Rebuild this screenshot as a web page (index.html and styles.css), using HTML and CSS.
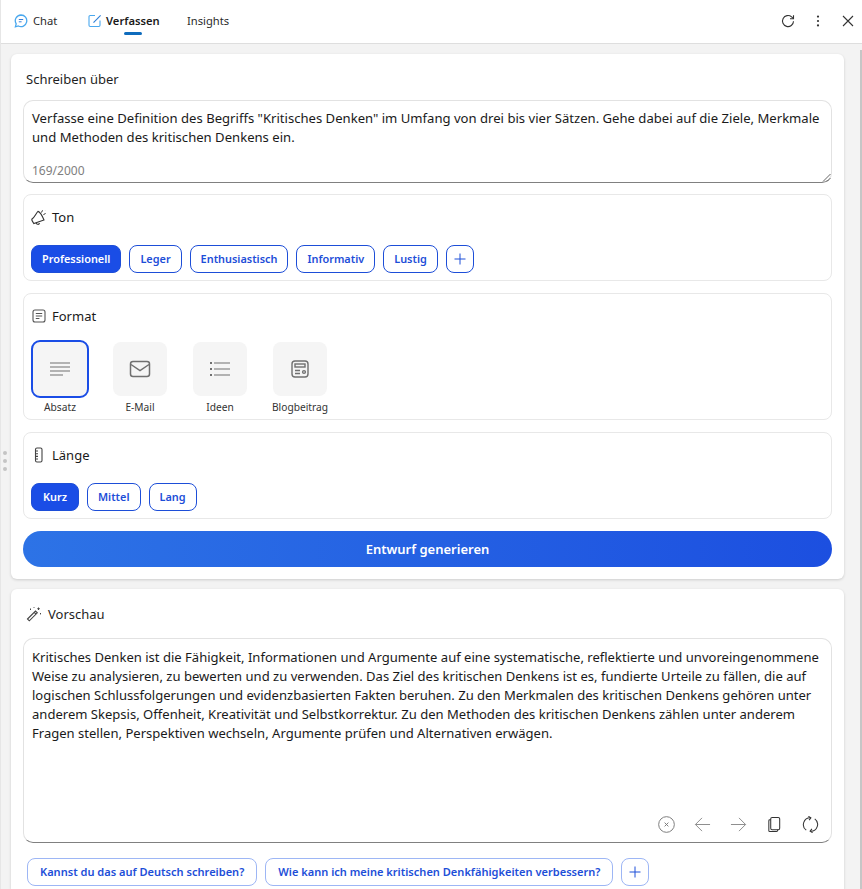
FILE: index.html
```html
<!DOCTYPE html>
<html lang="de">
<head>
<meta charset="utf-8">
<title>Verfassen</title>
<link rel="stylesheet" href="styles.css">
</head>
<body>
<div class="app">
  <header class="topbar">
    <nav class="tabs">
      <a class="tab tab-chat">
        <svg class="tab-icon" viewBox="0 0 14 14" fill="none" stroke="#4aa8ee" stroke-width="1.300"><path d="M7 1a5.800 5.800 0 1 1-2.600 11L1.400 12.900l.8-3A5.800 5.800 0 0 1 7 1z"/><path d="M4.800 5.500h4.400M4.800 7.800h2.800" stroke="#3a7fd8" stroke-width="1"/></svg>
        <span>Chat</span>
      </a>
      <a class="tab tab-compose active">
        <svg class="tab-icon" viewBox="0 0 14 14" fill="none" stroke="#4aa8ee" stroke-width="1.100"><path d="M7 1.500H2.200a1.200 1.200 0 0 0-1.200 1.200v8.600a1.200 1.200 0 0 0 1.200 1.200h8.600a1.200 1.200 0 0 0 1.200-1.200V6.500"/><path d="M5.500 8.600 12.600 1.400" stroke="#2f7fd8"/></svg>
        <span>Verfassen</span>
      </a>
      <a class="tab tab-insights"><span>Insights</span></a>
    </nav>
    <div class="win-actions">
      <svg class="win-icon" viewBox="0 0 14 14" fill="none" stroke="#333" stroke-width="1.100"><path d="M12.500 7.200A5.500 5.500 0 1 1 10.600 2.900L12.500 4.600"/><path d="M12.500 1.200v3.500H9"/></svg>
      <svg class="win-icon" viewBox="0 0 14 14" fill="#333"><circle cx="7" cy="2.600" r="1.100"/><circle cx="7" cy="7" r="1.100"/><circle cx="7" cy="11.400" r="1.100"/></svg>
      <svg class="win-icon" viewBox="0 0 14 14" fill="none" stroke="#333" stroke-width="1.100"><path d="M2 2l10 10M12 2 2 12"/></svg>
    </div>
  </header>

  <main class="content">
    <span class="grip"><i></i><i></i><i></i></span>
    <span class="scroll-edge"></span>

    <section class="card compose-card">
      <h2 class="card-title">Schreiben über</h2>
      <div class="textbox">
        <p>Verfasse eine Definition des Begriffs "Kritisches Denken" im Umfang von drei bis vier Sätzen. Gehe dabei auf die Ziele, Merkmale und Methoden des kritischen Denkens ein.</p>
        <span class="counter">169/2000</span>
        <svg class="resizer" viewBox="0 0 9 9" stroke="#666" stroke-width="1"><path d="M1 8.500 8.500 1M5 8.500l3.500-3.500"/></svg>
      </div>

      <div class="panel panel-tone">
        <div class="panel-head">
          <svg class="head-icon" viewBox="0 0 16 16" fill="none" stroke="#333" stroke-width="1.100"><path d="M7 2.400C9.200 2.800 11.300 7 13 11L2.800 14.600C2.200 13.200.6 11.800.8 10.200 3.800 8.300 5 4.200 7 2.400z"/><path d="M5 13.800c.5 1.800 2.900 2.100 3.600.4"/><path d="M10.500 3.500l1-2.200M12.400 5.600l2.200-1.100M14 1.200l.1.100" stroke-width="1"/></svg>
          <span>Ton</span>
        </div>
        <div class="pills">
          <button class="pill selected">Professionell</button>
          <button class="pill">Leger</button>
          <button class="pill">Enthusiastisch</button>
          <button class="pill">Informativ</button>
          <button class="pill">Lustig</button>
          <button class="pill pill-add"><svg viewBox="0 0 12 12" stroke="#1d4ed8" stroke-width="1" fill="none"><path d="M6 .500v11M.500 6h11"/></svg></button>
        </div>
      </div>

      <div class="panel panel-format">
        <div class="panel-head">
          <svg class="head-icon" viewBox="0 0 16 16" fill="none" stroke="#555" stroke-width="1.100"><rect x="2" y="2" width="12" height="12" rx="2"/><path d="M4.800 5.500h6.400M4.800 8h6.400M4.800 10.500h3.600"/></svg>
          <span>Format</span>
        </div>
        <div class="formats">
          <div class="format selected">
            <span class="format-tile">
              <svg viewBox="0 0 22 16" fill="none" stroke="#707070" stroke-width="1.200"><path d="M1 2h20M1 6h20M1 10h20M1 14h13"/></svg>
            </span>
            <span class="format-label">Absatz</span>
          </div>
          <div class="format">
            <span class="format-tile">
              <svg viewBox="0 0 22 18" fill="none" stroke="#707070" stroke-width="1.500"><rect x="1.500" y="1.500" width="19" height="15" rx="2.500"/><path d="M2 4.500l9 6 9-6"/></svg>
            </span>
            <span class="format-label">E-Mail</span>
          </div>
          <div class="format">
            <span class="format-tile">
              <svg viewBox="0 0 22 16" fill="none" stroke="#707070" stroke-width="1.200"><path d="M5 2h16M5 8h16M5 14h16"/><path d="M1 2h2M1 8h2M1 14h2" stroke-width="1.800"/></svg>
            </span>
            <span class="format-label">Ideen</span>
          </div>
          <div class="format">
            <span class="format-tile">
              <svg viewBox="0 0 20 20" fill="none" stroke="#707070" stroke-width="1.400"><rect x="2" y="2" width="16" height="16" rx="3"/><rect x="5" y="5" width="10" height="3"/><path d="M5 11.500h5M5 14.500h5"/><circle cx="14" cy="13" r="1.400"/></svg>
            </span>
            <span class="format-label">Blogbeitrag</span>
          </div>
        </div>
      </div>

      <div class="panel panel-length">
        <div class="panel-head">
          <svg class="head-icon" viewBox="0 0 16 16" fill="none" stroke="#444" stroke-width="1.100"><rect x="4.500" y="1" width="6.500" height="14" rx="1.500"/><path d="M4.500 4h2.500M4.500 6.700h2.500M4.500 9.400h2.500M4.500 12h2.500"/></svg>
          <span>Länge</span>
        </div>
        <div class="pills">
          <button class="pill selected">Kurz</button>
          <button class="pill">Mittel</button>
          <button class="pill">Lang</button>
        </div>
      </div>

      <button class="generate">Entwurf generieren</button>
    </section>

    <section class="card preview-card">
      <h2 class="preview-title">
        <svg class="wand" viewBox="0 0 16 16" fill="none" stroke="#444" stroke-width="1.100"><path d="M1.500 13l8-8 1.800 1.800-8 8z"/><path d="M8.200 6.300l1.800 1.800"/><path d="M12.500 1.500v2.500M11.300 2.700h2.500M14.500 7v1.400M4.500 2.500v1.500M8 1v.8" stroke-width="1"/></svg>
        <span>Vorschau</span>
      </h2>
      <div class="preview-box">
        <p>Kritisches Denken ist die Fähigkeit, Informationen und Argumente auf eine systematische, reflektierte und unvoreingenommene Weise zu analysieren, zu bewerten und zu verwenden. Das Ziel des kritischen Denkens ist es, fundierte Urteile zu fällen, die auf logischen Schlussfolgerungen und evidenzbasierten Fakten beruhen. Zu den Merkmalen des kritischen Denkens gehören unter anderem Skepsis, Offenheit, Kreativität und Selbstkorrektur. Zu den Methoden des kritischen Denkens zählen unter anderem Fragen stellen, Perspektiven wechseln, Argumente prüfen und Alternativen erwägen.</p>
        <div class="preview-actions">
          <svg viewBox="0 0 18 18" fill="none" stroke="#777" stroke-width="1"><circle cx="9" cy="9" r="8.300"/><path d="M7 7l4 4M11 7l-4 4"/></svg>
          <svg viewBox="0 0 18 18" fill="none" stroke="#888" stroke-width="1"><path d="M17 9H1.500M8.500 2 1.500 9l7 7"/></svg>
          <svg viewBox="0 0 18 18" fill="none" stroke="#888" stroke-width="1"><path d="M1 9h15.500M9.500 2l7 7-7 7"/></svg>
          <svg viewBox="0 0 18 18" fill="none" stroke="#333" stroke-width="1.100"><rect x="5" y="1.500" width="9.500" height="13" rx="1.500"/><path d="M5 4H4a1 1 0 0 0-1 1v10.500a1 1 0 0 0 1 1h7a1.500 1.500 0 0 0 1.300-2"/></svg>
          <svg viewBox="0 0 18 18" fill="none" stroke="#333" stroke-width="1.100"><path d="M4.500 15A7.300 7.300 0 0 1 9 1.800"/><path d="M6.800.300 9.400 2 7.500 4.300"/><path d="M13.500 3A7.300 7.300 0 0 1 9 16.200"/><path d="M11.200 17.700 8.600 16l1.900-2.300"/></svg>
        </div>
      </div>
      <div class="suggestions">
        <button class="suggestion">Kannst du das auf Deutsch schreiben?</button>
        <button class="suggestion">Wie kann ich meine kritischen Denkfähigkeiten verbessern?</button>
        <button class="suggestion suggestion-add"><svg viewBox="0 0 12 12" stroke="#1d4ed8" stroke-width="1" fill="none"><path d="M6 .500v11M.500 6h11"/></svg></button>
      </div>
    </section>
  </main>
</div>
</body>
</html>
```
FILE: styles.css
```css
* { box-sizing: border-box; }
html, body { margin: 0; height: 100%; }
body {
  font-family: "Noto Sans", "Open Sans", sans-serif;
  color: #1a1a1a;
  background: #f3f3f3;
  overflow: hidden;
}
.app { width: 862px; height: 889px; display: flex; flex-direction: column; border-left: 1px solid #e6e6e6; }
.topbar {
  height: 44px; flex: none; background: #fff; border-bottom: 1px solid #dedede;
  display: flex; align-items: center; justify-content: space-between;
  padding: 0 7px 2px 13px;
}
.tabs { display: flex; align-items: center; }
.tab { display: flex; align-items: center; font-size: 11.200px; color: #2b2b2b; position: relative; line-height: 16px; }
.tab-chat { gap: 5px; width: 74px; }
.tab-compose { gap: 4px; width: 99px; font-weight: 600; color: #1a1a1a; }
.tab-icon { width: 14px; height: 14px; }
.tab.active::after {
  content: ""; position: absolute; left: 36px; top: 19px; width: 18px; height: 3px;
  background: #0f6cbd; border-radius: 2px;
}
.win-actions { display: flex; gap: 16px; }
.win-icon { width: 14px; height: 14px; display: block; }

.content { flex: 1; position: relative; padding: 10px 18px 0 10px; display: flex; flex-direction: column; gap: 10px; }
.grip { position: absolute; left: 2px; top: 407px; display: flex; flex-direction: column; gap: 4px; }
.grip i { width: 4px; height: 4px; border-radius: 50%; background: #c4c4c4; display: block; }
.scroll-edge { position: absolute; right: 0; top: 6px; bottom: 0; width: 2px; background: #c6c6c6; }
.card { background: #fff; border-radius: 6px; box-shadow: 0 1px 3px rgba(0,0,0,.16); padding: 0 12px; }
.compose-card { height: 525px; }
.card-title { margin: 0; font-size: 13px; font-weight: 400; line-height: 18px; padding: 16px 3px 12px; height: 46px; color: #1f1f1f; }
.textbox {
  position: relative; height: 83px; border: 1px solid #e2e2e2; border-bottom: 1.500px solid #808080;
  border-radius: 10px; padding: 8px 8px 0;
}
.textbox p { margin: 0; font-size: 13.100px; line-height: 19px; color: #1a1a1a; }
.counter { position: absolute; left: 8px; bottom: 3px; font-size: 12px; line-height: 16px; color: #808080; }
.resizer { position: absolute; right: 0; bottom: 0; width: 9px; height: 9px; }
.panel { border: 1px solid #e8e8e8; border-radius: 8px; margin-top: 11px; padding: 0 7px; }
.panel-tone { height: 87px; }
.panel-format { height: 127px; margin-top: 12px; }
.panel-length { height: 87px; margin-top: 12px; }
.panel-head { display: flex; align-items: center; gap: 5px; height: 45px; padding-bottom: 1px; font-size: 13px; color: #1a1a1a; }
.head-icon { width: 16px; height: 16px; flex: none; }
.pills { display: flex; gap: 8px; margin-top: 5px; }
.pill {
  height: 28px; min-width: 48px; border: 1px solid #1d4ed8; border-radius: 8px; background: #fff; color: #1d4ed8;
  font: 600 10.900px/16px "Noto Sans", sans-serif; padding: 0 10px;
}
.pill.selected { background: #1a4de6; color: #fff; }
.pill.pill-add { width: 28px; min-width: 28px; padding: 0; display: flex; align-items: center; justify-content: center; }
.pill-add svg { width: 12px; height: 12px; }
.formats { display: flex; gap: 24px; padding: 2px 0 0 1px; }
.panel-format .panel-head { height: 44px; }
.format { width: 56px; display: flex; flex-direction: column; align-items: center; }
.format-tile { width: 54px; height: 54px; margin: 2px 0 1px; background: #f5f5f5; border-radius: 8px; display: flex; align-items: center; justify-content: center; }
.format.selected .format-tile { width: 58px; height: 58px; margin: 0 -1px -1px; border: 2px solid #1a4de6; border-radius: 9px; }
.format-tile svg { width: 22px; height: 20px; }
.format-label { font-size: 10.200px; line-height: 14px; white-space: nowrap; color: #333; margin-top: 3px; }
.generate {
  display: block; width: 100%; height: 36px; margin-top: 12px; border: 0; border-radius: 18px;
  background: linear-gradient(90deg, #2d73e6, #1c4fe0); color: #fff;
  font: 600 13px/18px "Noto Sans", sans-serif;
}
.preview-card { height: 300px; border-radius: 6px 6px 0 0; }
.preview-title { margin: 0; display: flex; align-items: center; gap: 5px; height: 49px; padding: 1px 3px 0; font-size: 13px; font-weight: 400; color: #1f1f1f; }
.preview-title span { margin-left: 1px; }
.wand { width: 16px; height: 16px; }
.preview-box {
  height: 205px; border: 1px solid #e2e2e2; border-bottom: 1.500px solid #808080;
  border-radius: 10px; padding: 9px 8px 0; display: flex; flex-direction: column; justify-content: space-between;
}
.preview-box p { margin: 0; font-size: 13.050px; line-height: 19px; color: #1a1a1a; }
.preview-actions { display: flex; justify-content: flex-end; gap: 19px; padding: 0 4px 9px 0; }
.preview-actions svg { width: 17px; height: 17px; display: block; }
.suggestions { display: flex; gap: 8px; margin-top: 15px; padding-left: 4px; }
.suggestion {
  height: 28px; border: 1px solid #9db6f5; border-radius: 8px; background: #fff; color: #1d4ed8;
  font: 600 11.050px/16px "Noto Sans", sans-serif; padding: 0 12px; white-space: nowrap;
}
.suggestion-add { width: 28px; padding: 0; display: flex; align-items: center; justify-content: center; }
.suggestion-add svg { width: 12px; height: 12px; }
```
